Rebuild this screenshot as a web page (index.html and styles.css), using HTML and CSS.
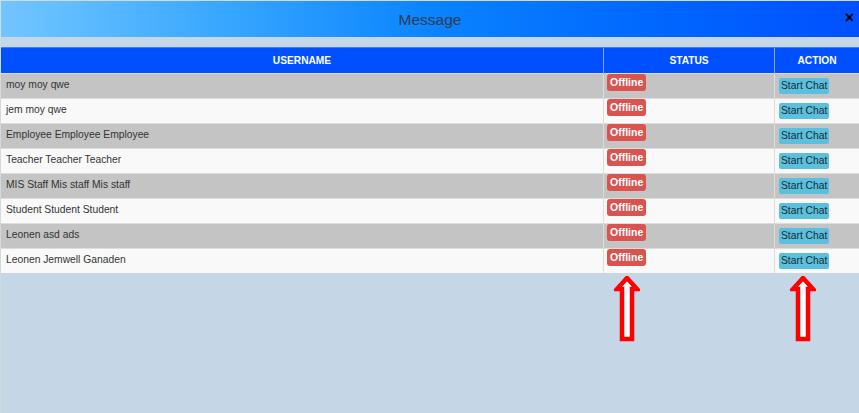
FILE: index.html
```html
<!DOCTYPE html>
<html>
<head>
<meta charset="utf-8">
<link rel="stylesheet" href="styles.css">
</head>
<body>
<div class="modal">
  <div class="modal-header">
    <span class="title">Message</span>
    <span class="close">×</span>
  </div>
  <div class="strip"></div>
  <table class="grid">
    <thead>
      <tr><th class="c-user">USERNAME</th><th class="c-status">STATUS</th><th class="c-action">ACTION</th></tr>
    </thead>
    <tbody>
      <tr class="odd"><td class="name">moy moy qwe</td><td class="st"><span class="badge">Offline</span></td><td class="ac"><span class="btn">Start Chat</span></td></tr>
      <tr class="even"><td class="name">jem moy qwe</td><td class="st"><span class="badge">Offline</span></td><td class="ac"><span class="btn">Start Chat</span></td></tr>
      <tr class="odd"><td class="name">Employee Employee Employee</td><td class="st"><span class="badge">Offline</span></td><td class="ac"><span class="btn">Start Chat</span></td></tr>
      <tr class="even"><td class="name">Teacher Teacher Teacher</td><td class="st"><span class="badge">Offline</span></td><td class="ac"><span class="btn">Start Chat</span></td></tr>
      <tr class="odd"><td class="name">MIS Staff Mis staff Mis staff</td><td class="st"><span class="badge">Offline</span></td><td class="ac"><span class="btn">Start Chat</span></td></tr>
      <tr class="even"><td class="name">Student Student Student</td><td class="st"><span class="badge">Offline</span></td><td class="ac"><span class="btn">Start Chat</span></td></tr>
      <tr class="odd"><td class="name">Leonen asd ads</td><td class="st"><span class="badge">Offline</span></td><td class="ac"><span class="btn">Start Chat</span></td></tr>
      <tr class="even"><td class="name">Leonen Jemwell Ganaden</td><td class="st"><span class="badge">Offline</span></td><td class="ac"><span class="btn">Start Chat</span></td></tr>
    </tbody>
  </table>
  <svg class="arrow a1" width="26" height="66" viewBox="0 0 26 66"><polygon points="13,2 23,13 18,13 18,63 8,63 8,13 3,13" fill="#fff" stroke="#ff0000" stroke-width="4.5" stroke-linejoin="miter"/></svg>
  <svg class="arrow a2" width="26" height="66" viewBox="0 0 26 66"><polygon points="13,2 23,13 18,13 18,63 8,63 8,13 3,13" fill="#fff" stroke="#ff0000" stroke-width="4.5" stroke-linejoin="miter"/></svg>
</div>
</body>
</html>
```
FILE: styles.css
```css
html, body {
  margin: 0;
  padding: 0;
}
body {
  width: 859px;
  height: 413px;
  overflow: hidden;
  background: #c5d6e6;
  font-family: "Liberation Sans", Arial, sans-serif;
}
.modal {
  position: relative;
  width: 858px;
  height: 412px;
  border-left: 1px solid #d4d9de;
  border-top: 1px solid #d4d9de;
  background: #c5d6e6;
}
.modal-header {
  height: 36px;
  background: linear-gradient(to right, #72c6ff 0%, #3aa8ff 25%, #0a84ff 50%, #0068ff 75%, #0050ff 100%);
  display: flex;
  align-items: center;
  justify-content: center;
  position: relative;
}
.title {
  font-size: 15.5px;
  color: #2f3d4c;
  margin-top: 2px;
}
.close {
  position: absolute;
  right: 5px;
  top: 8px;
  font-size: 16px;
  font-weight: bold;
  color: #000;
  line-height: 17px;
}
.strip {
  height: 10px;
  background: #c5d6e6;
}
.grid {
  width: 858px;
  border-collapse: collapse;
  font-size: 10.3px;
  table-layout: fixed;
}
.grid th {
  background: #0050ff;
  color: #fff;
  font-weight: bold;
  font-size: 10.2px;
  height: 25px;
  padding: 0;
  text-align: center;
  border-top: 1px solid #3f7dff;
  border-left: 1px solid #8aa8e8;
}
.grid th:first-child { border-left: none; }
.c-user { width: 602px; }
.c-status { width: 170px; }
.grid td {
  height: 24px;
  padding: 0;
  border-top: 1px solid #dddddd;
  border-left: 1px solid #dddddd;
  vertical-align: top;
  color: #333;
}
.grid td:first-child { border-left: none; }
.odd td { background: #c4c4c4; }
.even td { background: #f9f9f9; }
.name {
  padding-left: 5px !important;
  line-height: 22px;
}
.st { padding-left: 3px !important; }
.badge {
  display: inline-block;
  background: #d9534f;
  color: #fff;
  font-weight: bold;
  font-size: 10.5px;
  line-height: 11px;
  padding: 3px 3px 3px;
  border-radius: 3px;
}
.ac { padding-left: 4px !important; }
.btn {
  display: inline-block;
  margin-top: 4px;
  background: #5bc0de;
  color: #1a2a33;
  font-size: 10.3px;
  line-height: 14px;
  padding: 1px 2px 1px;
  border-radius: 2px;
}
.arrow {
  position: absolute;
  top: 275px;
}
.a1 { left: 613px; }
.a2 { left: 789px; }
```
